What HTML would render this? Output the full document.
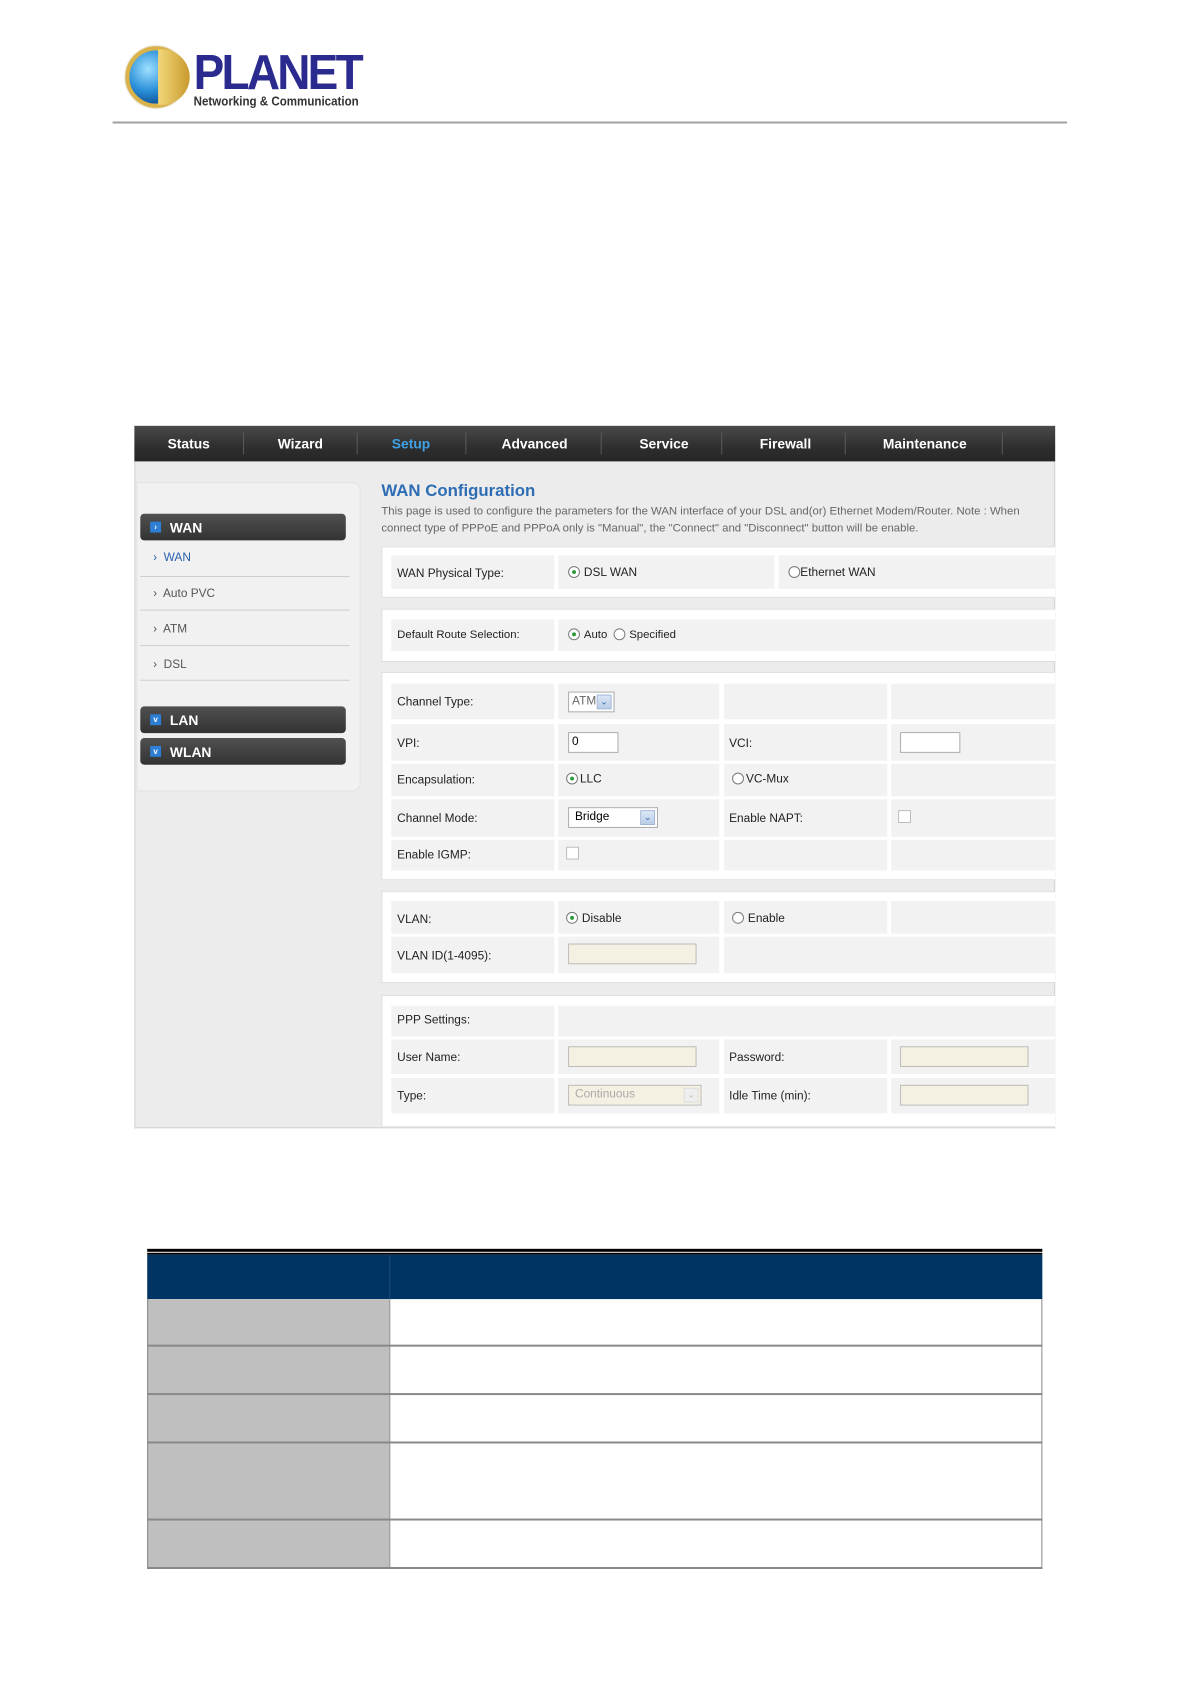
<!DOCTYPE html>
<html><head><meta charset="utf-8"><style>
*{margin:0;padding:0;box-sizing:border-box}
body{width:1191px;height:1684px;background:#fff;position:relative;font-family:"Liberation Sans",Arial,sans-serif;overflow:hidden}
#w{position:absolute;left:0;top:0;width:1191px;height:1684px;transform:scale(0.988);transform-origin:0 0}
.a{position:absolute}
.nav{left:136px;top:431px;width:932px;height:36px;background:linear-gradient(#4a4a4a,#2e2e2e 60%,#262626)}
.nav span{position:absolute;top:10px;color:#fff;font-weight:bold;font-size:14px;transform:translateX(-50%)}
.nav i{position:absolute;top:7px;width:1px;height:22px;background:#5a5a5a}
.btn{position:absolute;left:142px;width:208px;height:27px;border-radius:4px;background:linear-gradient(#505050,#333);color:#fff;font-weight:bold;font-size:14px;padding:6px 0 0 30px}
.btn b{position:absolute;left:10px;top:8px;width:11px;height:11px;background:#2d7fd6;color:#fff;font-size:8px;line-height:11px;text-align:center}
.sub{position:absolute;left:155px;font-size:12px;color:#555}
.sep{position:absolute;left:142px;width:212px;height:1px;background:#ccc}
.pan{position:absolute;left:386px;width:682px;background:#fff;border:1px solid #ddd;border-right:none}
.c{position:absolute;background:#f2f2f2}
.l{position:absolute;font-size:12px;color:#222}
.r{display:inline-block;width:12px;height:12px;border:1px solid #777;border-radius:50%;vertical-align:-2px;margin-right:4px;position:relative;background:#fff}
.r.on::after{content:"";position:absolute;left:3px;top:3px;width:4px;height:4px;border-radius:50%;background:#2a9a3a}
.inp{position:absolute;border:1px solid #aaa;background:#fff;font-size:12px;padding:1px 3px}
.dis{background:#f5f1e2;border-color:#bbb}
.dd{position:absolute;right:2px;top:2px;width:15px;height:15px;background:linear-gradient(#dbe6f5,#b9cde8);border:1px solid #9fb4d3;color:#2b5da8;font-size:9px;line-height:13px;text-align:center}
.cb{position:absolute;width:13px;height:13px;border:1px solid #bbb;background:#fff}
</style></head><body><div id="w">
<div class="a" style="left:127px;top:47px;width:62px;height:62px;border-radius:50%;background:radial-gradient(circle at 35% 35%,#9fe0ff,#2a8fd8 45%,#0f4f96 75%);border:4px solid #d9b24a;box-shadow:0 0 2px #a07d20"></div>
<div class="a" style="left:160px;top:50px;width:32px;height:56px;border-radius:0 30px 30px 0;background:linear-gradient(90deg,#f2d77a,#c99a2e)"></div>
<div class="a" style="left:196px;top:44px;font-size:50px;font-weight:bold;color:#2b2b8f;letter-spacing:-3px;transform:scaleX(0.93);transform-origin:left">PLANET</div>
<div class="a" style="left:196px;top:95px;font-size:13px;font-weight:bold;color:#333;transform:scaleX(0.9);transform-origin:left">Networking &amp; Communication</div>
<div class="a" style="left:114px;top:123px;width:966px;height:2px;background:#a0a0a0"></div>

<div class="a" style="left:136px;top:467px;width:932px;height:675px;background:#ececec;border:1px solid #d0d0d0;border-top:none"></div>
<div class="nav a">
<span style="left:55px">Status</span><i style="left:110px"></i>
<span style="left:168px">Wizard</span><i style="left:225px"></i>
<span style="left:280px;color:#3fa2e6">Setup</span><i style="left:335px"></i>
<span style="left:405px">Advanced</span><i style="left:472px"></i>
<span style="left:536px">Service</span><i style="left:594px"></i>
<span style="left:659px">Firewall</span><i style="left:719px"></i>
<span style="left:800px">Maintenance</span><i style="left:878px"></i>
</div>
<div class="a" style="left:138px;top:488px;width:227px;height:313px;background:#f1f1f1;border:1px solid #e2e2e2;border-radius:0 8px 8px 0"></div>
<div class="btn" style="top:520px"><b>›</b>WAN</div>
<div class="sub" style="top:557px;color:#2a60b0">›&nbsp; WAN</div><div class="sep" style="top:583px"></div>
<div class="sub" style="top:593px">›&nbsp; Auto PVC</div><div class="sep" style="top:617px"></div>
<div class="sub" style="top:629px">›&nbsp; ATM</div><div class="sep" style="top:653px"></div>
<div class="sub" style="top:665px">›&nbsp; DSL</div><div class="sep" style="top:688px"></div>
<div class="btn" style="top:715px"><b>v</b>LAN</div>
<div class="btn" style="top:747px"><b>v</b>WLAN</div>

<div class="a" style="left:386px;top:487px;font-size:17px;font-weight:bold;color:#2e6db4">WAN Configuration</div>
<div class="a" style="left:386px;top:510px;font-size:11.5px;color:#666;line-height:17px;width:682px">This page is used to configure the parameters for the WAN interface of your DSL and(or) Ethernet Modem/Router. Note : When connect type of PPPoE and PPPoA only is "Manual", the "Connect" and "Disconnect" button will be enable.</div>

<div class="pan" style="top:553px;height:52px"></div>
<div class="c" style="left:396px;top:562px;width:165px;height:34px"></div>
<div class="c" style="left:565px;top:562px;width:219px;height:34px"></div>
<div class="c" style="left:788px;top:562px;width:280px;height:34px"></div>
<div class="l" style="left:402px;top:573px">WAN Physical Type:</div>
<div class="l" style="left:575px;top:572px"><span class="r on"></span>DSL WAN</div>
<div class="l" style="left:798px;top:572px"><span class="r" style="margin-right:0"></span>Ethernet WAN</div>
<div class="pan" style="top:616px;height:54px"></div>
<div class="c" style="left:396px;top:627px;width:165px;height:32px"></div>
<div class="c" style="left:565px;top:627px;width:503px;height:32px"></div>
<div class="l" style="left:402px;top:637px;font-size:11.5px">Default Route Selection:</div>
<div class="l" style="left:575px;top:636px;font-size:11.5px"><span class="r on"></span>Auto <span class="r" style="margin-left:3px"></span>Specified</div>
<div class="pan" style="top:680px;height:211px"></div>
<div class="c" style="left:396px;top:692px;width:165px;height:36px"></div><div class="c" style="left:565px;top:692px;width:163px;height:36px"></div><div class="c" style="left:733px;top:692px;width:165px;height:36px"></div><div class="c" style="left:902px;top:692px;width:166px;height:36px"></div>
<div class="c" style="left:396px;top:733px;width:165px;height:37px"></div><div class="c" style="left:565px;top:733px;width:163px;height:37px"></div><div class="c" style="left:733px;top:733px;width:165px;height:37px"></div><div class="c" style="left:902px;top:733px;width:166px;height:37px"></div>
<div class="c" style="left:396px;top:773px;width:165px;height:33px"></div><div class="c" style="left:565px;top:773px;width:163px;height:33px"></div><div class="c" style="left:733px;top:773px;width:165px;height:33px"></div><div class="c" style="left:902px;top:773px;width:166px;height:33px"></div>
<div class="c" style="left:396px;top:809px;width:165px;height:38px"></div><div class="c" style="left:565px;top:809px;width:163px;height:38px"></div><div class="c" style="left:733px;top:809px;width:165px;height:38px"></div><div class="c" style="left:902px;top:809px;width:166px;height:38px"></div>
<div class="c" style="left:396px;top:850px;width:165px;height:31px"></div><div class="c" style="left:565px;top:850px;width:163px;height:31px"></div><div class="c" style="left:733px;top:850px;width:165px;height:31px"></div><div class="c" style="left:902px;top:850px;width:166px;height:31px"></div>
<div class="l" style="left:402px;top:703px">Channel Type:</div>
<div class="inp" style="left:575px;top:700px;width:47px;height:21px;color:#666">ATM<div class="dd">⌄</div></div>
<div class="l" style="left:402px;top:745px">VPI:</div>
<div class="inp" style="left:575px;top:741px;width:51px;height:21px">0</div>
<div class="l" style="left:738px;top:745px">VCI:</div>
<div class="inp" style="left:911px;top:741px;width:61px;height:21px"></div>
<div class="l" style="left:402px;top:782px">Encapsulation:</div>
<div class="l" style="left:573px;top:781px"><span class="r on" style="margin-right:2px"></span>LLC</div>
<div class="l" style="left:741px;top:781px"><span class="r" style="margin-right:2px"></span>VC-Mux</div>
<div class="l" style="left:402px;top:821px">Channel Mode:</div>
<div class="inp" style="left:575px;top:817px;width:91px;height:21px;padding-left:6px">Bridge<div class="dd">⌄</div></div>
<div class="l" style="left:738px;top:821px">Enable NAPT:</div>
<div class="cb" style="left:909px;top:820px"></div>
<div class="l" style="left:402px;top:858px">Enable IGMP:</div>
<div class="cb" style="left:573px;top:857px"></div>
<div class="pan" style="top:902px;height:93px"></div>
<div class="c" style="left:396px;top:912px;width:165px;height:33px"></div><div class="c" style="left:565px;top:912px;width:163px;height:33px"></div><div class="c" style="left:733px;top:912px;width:165px;height:33px"></div><div class="c" style="left:902px;top:912px;width:166px;height:33px"></div>
<div class="c" style="left:396px;top:948px;width:165px;height:37px"></div><div class="c" style="left:565px;top:948px;width:163px;height:37px"></div><div class="c" style="left:733px;top:948px;width:335px;height:37px"></div>
<div class="l" style="left:402px;top:923px">VLAN:</div>
<div class="l" style="left:573px;top:922px"><span class="r on"></span>Disable</div>
<div class="l" style="left:741px;top:922px"><span class="r"></span>Enable</div>
<div class="l" style="left:402px;top:960px">VLAN ID(1-4095):</div>
<div class="inp dis" style="left:575px;top:955px;width:130px;height:21px"></div>
<div class="pan" style="top:1007px;height:134px"></div>
<div class="c" style="left:396px;top:1018px;width:165px;height:31px"></div><div class="c" style="left:565px;top:1018px;width:503px;height:31px"></div>
<div class="c" style="left:396px;top:1052px;width:165px;height:35px"></div><div class="c" style="left:565px;top:1052px;width:163px;height:35px"></div><div class="c" style="left:733px;top:1052px;width:165px;height:35px"></div><div class="c" style="left:902px;top:1052px;width:166px;height:35px"></div>
<div class="c" style="left:396px;top:1091px;width:165px;height:36px"></div><div class="c" style="left:565px;top:1091px;width:163px;height:36px"></div><div class="c" style="left:733px;top:1091px;width:165px;height:36px"></div><div class="c" style="left:902px;top:1091px;width:166px;height:36px"></div>
<div class="l" style="left:402px;top:1025px">PPP Settings:</div>
<div class="l" style="left:402px;top:1063px">User Name:</div>
<div class="inp dis" style="left:575px;top:1059px;width:130px;height:21px"></div>
<div class="l" style="left:738px;top:1063px">Password:</div>
<div class="inp dis" style="left:911px;top:1059px;width:130px;height:21px"></div>
<div class="l" style="left:402px;top:1102px">Type:</div>
<div class="inp dis" style="left:575px;top:1098px;width:135px;height:21px;color:#aaa;padding-left:6px">Continuous<div class="dd" style="background:#eee;border-color:#ddd;color:#bbb">⌄</div></div>
<div class="l" style="left:738px;top:1102px">Idle Time (min):</div>
<div class="inp dis" style="left:911px;top:1098px;width:130px;height:21px"></div>

<div class="a" style="left:149px;top:1264px;width:906px;height:3px;background:#000"></div>
<div class="a" style="left:149px;top:1268px;width:906px;height:2px;background:#000"></div>
<div class="a" style="left:149px;top:1270px;width:906px;height:45px;background:#003462"></div>
<div class="a" style="left:394px;top:1270px;width:1px;height:45px;background:#1d4a78"></div>
<div class="a" style="left:149px;top:1315px;width:906px;height:273px;border:1px solid #888;border-top:none;background:#fff"></div>
<div class="a" style="left:149px;top:1315px;width:246px;height:272px;background:#bfbfbf;border-left:1px solid #888;border-right:1px solid #999"></div>
<div class="a" style="left:149px;top:1361px;width:906px;height:2px;background:#888"></div>
<div class="a" style="left:149px;top:1410px;width:906px;height:2px;background:#888"></div>
<div class="a" style="left:149px;top:1459px;width:906px;height:2px;background:#888"></div>
<div class="a" style="left:149px;top:1537px;width:906px;height:2px;background:#888"></div>
<div class="a" style="left:149px;top:1586px;width:906px;height:2px;background:#888"></div>
</div></body></html>
